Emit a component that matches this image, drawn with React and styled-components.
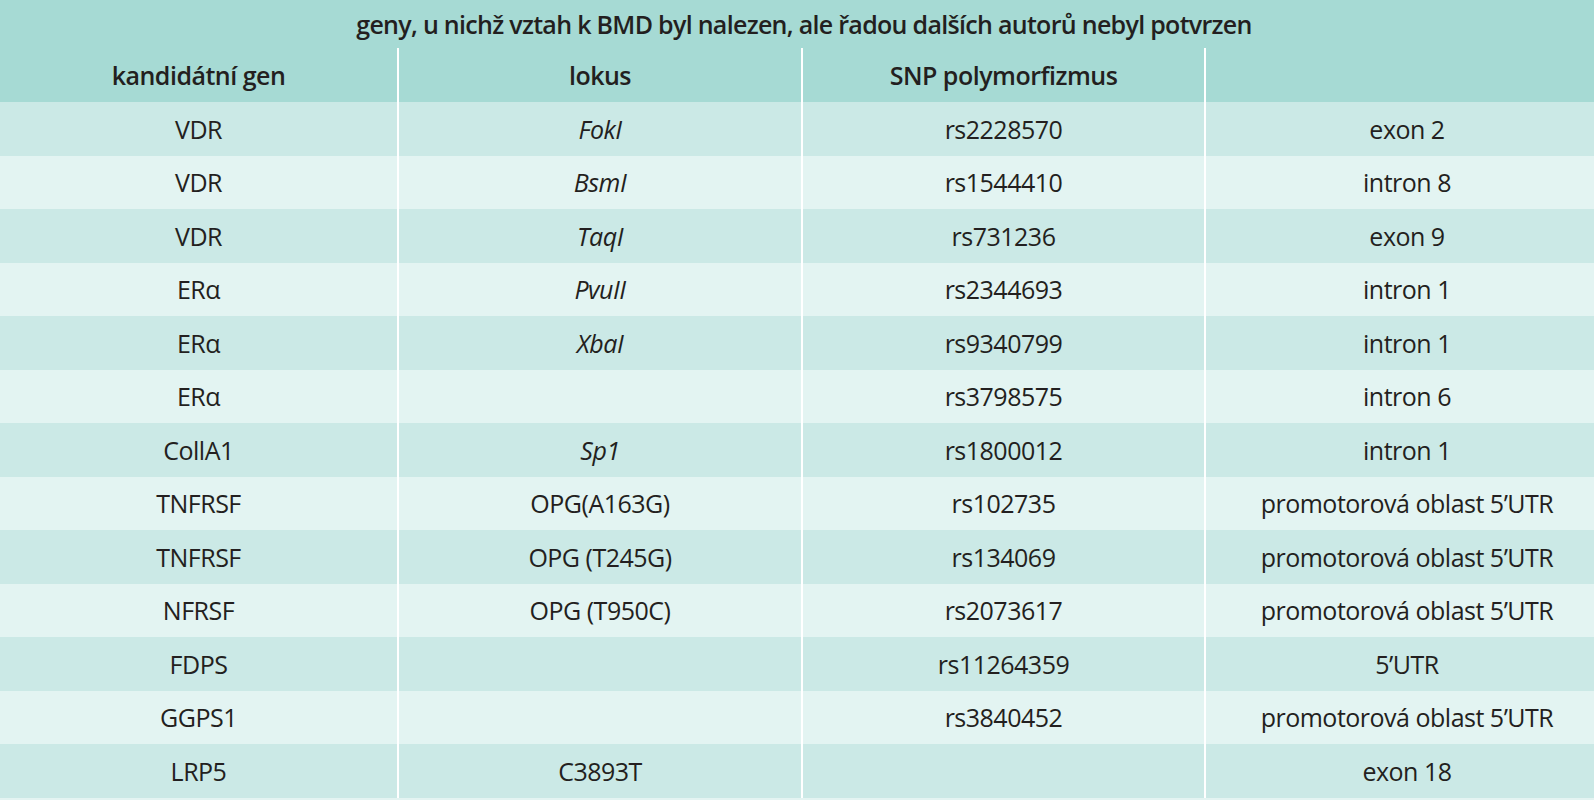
import React from "react";
import styled, { createGlobalStyle } from "styled-components";

const GlobalStyle = createGlobalStyle`
  html, body {
    margin: 0;
    padding: 0;
    background: #e4f4f2;
  }
`;

const rows = [
  { gen: "VDR", lokus: "FokI", italic: true, snp: "rs2228570", pos: "exon 2" },
  { gen: "VDR", lokus: "BsmI", italic: true, snp: "rs1544410", pos: "intron 8" },
  { gen: "VDR", lokus: "TaqI", italic: true, snp: "rs731236", pos: "exon 9" },
  { gen: "ERα", lokus: "PvuII", italic: true, snp: "rs2344693", pos: "intron 1" },
  { gen: "ERα", lokus: "XbaI", italic: true, snp: "rs9340799", pos: "intron 1" },
  { gen: "ERα", lokus: "", snp: "rs3798575", pos: "intron 6" },
  { gen: "CollA1", lokus: "Sp1", italic: true, snp: "rs1800012", pos: "intron 1" },
  { gen: "TNFRSF", lokus: "OPG(A163G)", snp: "rs102735", pos: "promotorová oblast 5’UTR" },
  { gen: "TNFRSF", lokus: "OPG (T245G)", snp: "rs134069", pos: "promotorová oblast 5’UTR" },
  { gen: "NFRSF", lokus: "OPG (T950C)", snp: "rs2073617", pos: "promotorová oblast 5’UTR" },
  { gen: "FDPS", lokus: "", snp: "rs11264359", pos: "5’UTR" },
  { gen: "GGPS1", lokus: "", snp: "rs3840452", pos: "promotorová oblast 5’UTR" },
  { gen: "LRP5", lokus: "C3893T", snp: "", pos: "exon 18" },
];

const App = () => {
  return (
    <>
      <GlobalStyle />
      <Table>
        <colgroup>
          <col style={{ width: 398 }} />
          <col style={{ width: 404 }} />
          <col style={{ width: 403 }} />
          <col />
        </colgroup>
        <thead>
          <TitleRow>
            <TitleCell colSpan={4}>
              geny, u nichž vztah k BMD byl nalezen, ale řadou dalších autorů nebyl potvrzen
            </TitleCell>
          </TitleRow>
          <HeadRow>
            <HeadCell>kandidátní gen</HeadCell>
            <HeadCell>lokus</HeadCell>
            <HeadCell>SNP polymorfizmus</HeadCell>
            <HeadCell></HeadCell>
          </HeadRow>
        </thead>
        <tbody>
          {rows.map((r, i) => (
            <Row key={i} $odd={i % 2 === 0}>
              <Cell>{r.gen}</Cell>
              <Cell $italic={r.italic}>{r.lokus}</Cell>
              <Cell>{r.snp}</Cell>
              <Cell $shift>{r.pos}</Cell>
            </Row>
          ))}
        </tbody>
      </Table>
    </>
  );
};

const Table = styled.table`
  width: 1594px;
  border-collapse: collapse;
  table-layout: fixed;
  font-family: "Open Sans", "Noto Sans", sans-serif;
  color: #231f20;
  font-size: 25px;
  letter-spacing: -0.5px;
`;

const TitleRow = styled.tr`
  height: 48px;
  background: #a6dad4;
`;

const TitleCell = styled.th`
  padding: 0 0 0 14px;
  font-weight: 600;
  letter-spacing: -0.7px;
  text-align: center;
  vertical-align: middle;
`;

const HeadRow = styled.tr`
  height: 54px;
  background: #a6dad4;
`;

const HeadCell = styled.th`
  padding: 0;
  font-weight: 600;
  text-align: center;
  vertical-align: middle;
  border-left: 2px solid #ffffff;
  &:first-child {
    border-left: none;
  }
`;

const Row = styled.tr`
  height: 53.5px;
  background: ${(p) => (p.$odd ? "#cbe9e6" : "#e3f4f2")};
`;

const Cell = styled.td`
  padding: 0 0 0 ${(p) => (p.$shift ? "14px" : "0")};
  text-align: center;
  vertical-align: middle;
  font-style: ${(p) => (p.$italic ? "italic" : "normal")};
  border-left: 2px solid #ffffff;
  &:first-child {
    border-left: none;
  }
`;

export default App;
